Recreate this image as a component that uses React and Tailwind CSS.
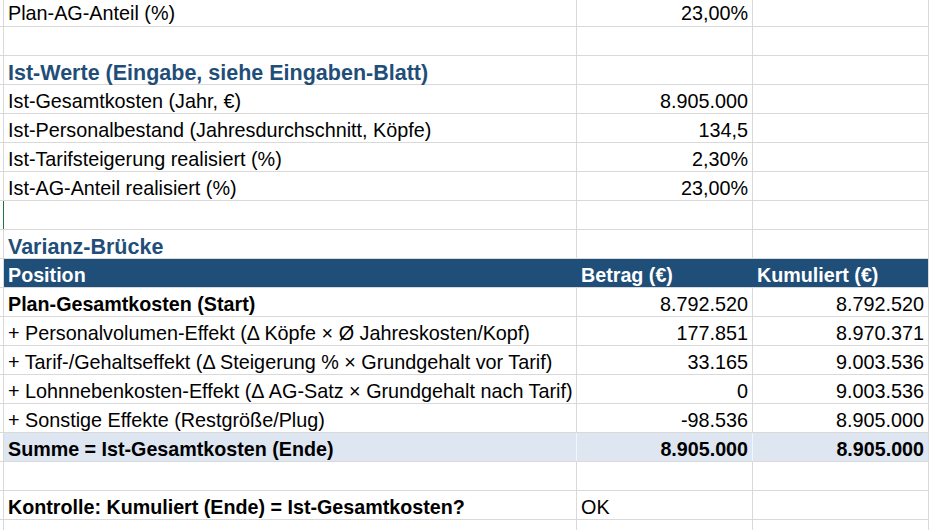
const rows = [
  { a: "Plan-AG-Anteil (%)", b: "23,00%", first: true },
  {},
  { a: "Ist-Werte (Eingabe, siehe Eingaben-Blatt)", kind: "title" },
  { a: "Ist-Gesamtkosten (Jahr, €)", b: "8.905.000" },
  { a: "Ist-Personalbestand (Jahresdurchschnitt, Köpfe)", b: "134,5" },
  { a: "Ist-Tarifsteigerung realisiert (%)", b: "2,30%" },
  { a: "Ist-AG-Anteil realisiert (%)", b: "23,00%" },
  { selected: true },
  { a: "Varianz-Brücke", kind: "title" },
  { a: "Position", b: "Betrag (€)", c: "Kumuliert (€)", kind: "head" },
  { a: "Plan-Gesamtkosten (Start)", b: "8.792.520", c: "8.792.520", boldA: true },
  { a: "+ Personalvolumen-Effekt (Δ Köpfe × Ø Jahreskosten/Kopf)", b: "177.851", c: "8.970.371" },
  { a: "+ Tarif-/Gehaltseffekt (Δ Steigerung % × Grundgehalt vor Tarif)", b: "33.165", c: "9.003.536" },
  { a: "+ Lohnnebenkosten-Effekt (Δ AG-Satz × Grundgehalt nach Tarif)", b: "0", c: "9.003.536" },
  { a: "+ Sonstige Effekte (Restgröße/Plug)", b: "-98.536", c: "8.905.000" },
  { a: "Summe = Ist-Gesamtkosten (Ende)", b: "8.905.000", c: "8.905.000", kind: "sum" },
  {},
  { a: "Kontrolle: Kumuliert (Ende) = Ist-Gesamtkosten?", b: "OK", boldA: true, leftB: true },
  {},
];

function Row({ r }) {
  const head = r.kind === "head";
  const sum = r.kind === "sum";
  const title = r.kind === "title";
  const fill = head ? "bg-[#1f4e79] text-white font-bold text-[19.7px]" : sum ? "bg-[#dde6f1] font-bold text-[19.7px]" : "";
  const line = head ? "border-[#1f4e79]" : sum ? "border-[#f2f6fa]" : "border-[#d9d9d9]";
  const pad = r.first ? "pt-[2px]" : "pt-[6px]";
  return (
    <div className={`flex ${r.first ? "h-[28px]" : "h-[29px]"} border-b border-[#d9d9d9] shrink-0`}>
      <div className="w-[3px] shrink-0" />
      <div
        className={`w-[574px] shrink-0 flex items-center ${pad} pl-[4px] whitespace-nowrap border-l ${
          r.selected ? "border-l-[#217346]" : "border-l-[#d9d9d9]"
        } border-r ${line} ${fill} ${title ? "font-bold text-[#1f4e79] text-[21.5px]" : ""} ${
          r.boldA ? "font-bold text-[19.7px]" : ""
        }`}
      >
        {r.a}
      </div>
      <div
        className={`w-[176px] shrink-0 flex items-center ${pad} ${
          r.leftB || head ? "justify-start pl-[4px]" : "justify-end pr-[4px]"
        } whitespace-nowrap border-r ${line} ${fill}`}
      >
        {r.b}
      </div>
      <div
        className={`w-[176px] shrink-0 flex items-center ${pad} ${
          head ? "justify-start pl-[4px]" : "justify-end pr-[4px]"
        } whitespace-nowrap border-r border-[#d9d9d9] ${fill}`}
      >
        {r.c}
      </div>
    </div>
  );
}

export default function App() {
  return (
    <div className="w-[929px] h-[531px] overflow-hidden bg-white text-black text-[19.8px] font-['Liberation_Sans',Arial,sans-serif] flex flex-col -mt-px">
      {rows.map((r, i) => (
        <Row key={i} r={r} />
      ))}
    </div>
  );
}
